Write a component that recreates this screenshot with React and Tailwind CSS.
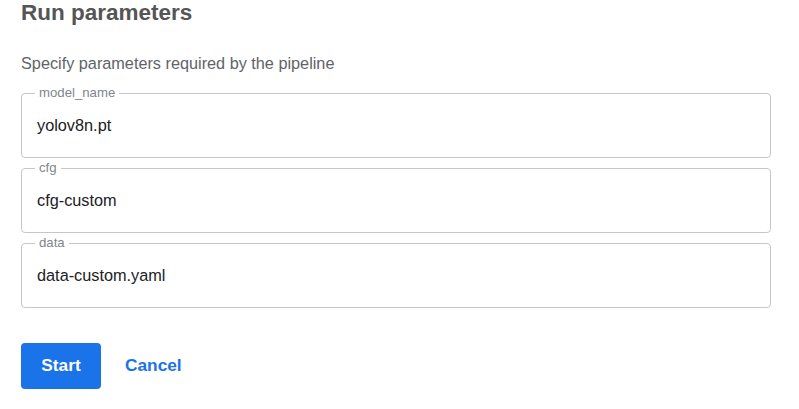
import { useState } from 'react';

const fields = [
    { name: 'model_name', value: 'yolov8n.pt' },
    { name: 'cfg', value: 'cfg-custom' },
    { name: 'data', value: 'data-custom.yaml' },
];

function ParamField({ name, value, onChange }) {
    return (
        <fieldset className="rounded-[4px] border border-[#c6c6c6]">
            <legend className="ml-[13px] px-[4px] text-[13.2px] leading-[16px] text-[#80868b]">
                {name}
            </legend>
            <input
                type="text"
                value={value}
                onChange={(e) => onChange(e.target.value)}
                className="block h-[56px] w-full bg-transparent px-[15px] pt-[12px] pb-[20px] text-[16.3px] leading-6 text-[#202124] outline-none"
            />
        </fieldset>
    );
}

export default function App() {
    const [values, setValues] = useState(fields.map((f) => f.value));

    return (
        <div className="min-h-[409px] bg-white pl-[21px] pr-[28px] font-['Liberation_Sans',Arial,sans-serif]">
            <h1 className="text-[22.5px] font-bold leading-[26px] text-[#555]">Run parameters</h1>
            <p className="mt-[25px] text-[16.25px] leading-6 text-[#5f6368]">
                Specify parameters required by the pipeline
            </p>

            <div className="mt-[10px] flex flex-col gap-[2px]">
                {fields.map((f, i) => (
                    <ParamField
                        key={f.name}
                        name={f.name}
                        value={values[i]}
                        onChange={(v) => setValues(values.map((old, j) => (j === i ? v : old)))}
                    />
                ))}
            </div>

            {/* Actions */}
            <div className="mt-[35px] flex items-center">
                <button className="h-[46px] w-[80px] rounded-[4px] bg-[#1a73e8] text-[17.3px] font-bold text-white">
                    Start
                </button>
                <button className="ml-[24px] text-[17.3px] font-bold text-[#1a73e8]">Cancel</button>
            </div>
        </div>
    );
}
